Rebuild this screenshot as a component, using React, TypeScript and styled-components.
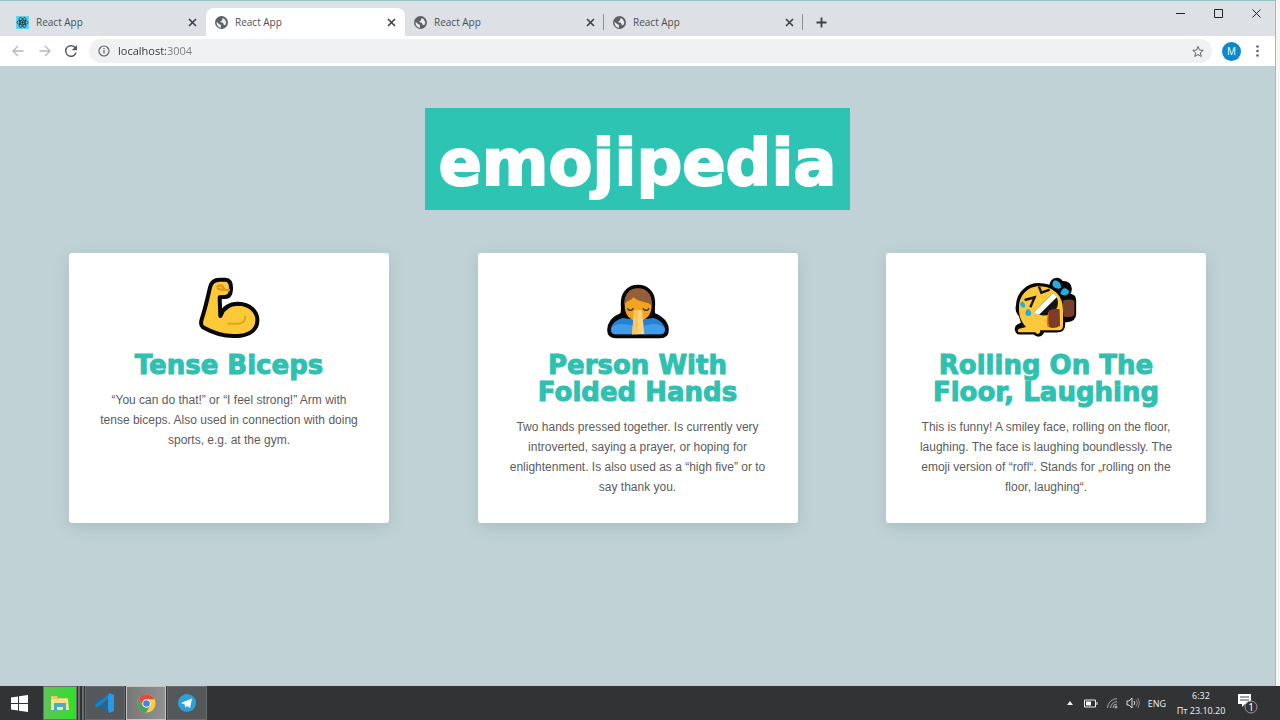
import React from "react";
import styled, { createGlobalStyle, css } from "styled-components";

const GlobalStyle = createGlobalStyle`
  *, *::before, *::after { box-sizing: border-box; }
  body { margin: 0; background: #f6f6f2; }
  button, input { font: inherit; color: inherit; border: 0; padding: 0; background: none; }
`;

const uiFont = `"Open Sans", "Noto Sans", sans-serif`;
const displayFont = `"DejaVu Sans", "Arial Black", sans-serif`;

const Desktop = styled.div`
  min-height: 100vh;
  display: flex;
  flex-direction: column;
  font-family: ${uiFont};
`;

const BrowserWindow = styled.div`
  flex: 1;
  display: flex;
  flex-direction: column;
  margin-right: 4px;
  border-top: 1px solid #96c4c5;
  border-right: 1px solid #8fc4bb;
`;

const TabStrip = styled.div`
  display: flex;
  align-items: flex-end;
  height: 35px;
  padding-left: 7px;
  background: #dde1e6;
`;

const Tab = styled.div<{ $active?: boolean; $divider?: boolean }>`
  position: relative;
  display: flex;
  align-items: center;
  width: 199px;
  height: 28px;
  padding: 0 8px 0 9px;
  font-size: 10px;
  line-height: 16px;
  color: #4b4e53;
  ${(p) =>
    p.$active &&
    css`
      background: #fff;
      border-radius: 8px 8px 0 0;
    `}
  ${(p) =>
    p.$divider &&
    css`
      &::after {
        content: "";
        position: absolute;
        right: 0;
        top: 6px;
        height: 16px;
        border-right: 1px solid #8c9094;
      }
    `}
`;

const TabTitle = styled.span`
  flex: 1;
  padding-left: 7px;
`;

const IconButton = styled.button<{ $w?: number; $h?: number }>`
  display: flex;
  align-items: center;
  justify-content: center;
  width: ${(p) => p.$w ?? 12}px;
  height: ${(p) => p.$h ?? 16}px;
  flex: none;
`;

const WindowControls = styled.div`
  display: flex;
  align-self: flex-start;
  margin-left: auto;
`;

const Toolbar = styled.div`
  display: flex;
  align-items: center;
  height: 30px;
  padding: 0 5px;
  background: #fff;
`;

const Omnibox = styled.div`
  flex: 1;
  display: flex;
  align-items: center;
  height: 24px;
  margin: 0 6px 0 5px;
  padding: 0 8px 0 9px;
  border-radius: 12px;
  background: #f0f1f3;
`;

const Address = styled.input`
  flex: 1;
  min-width: 0;
  margin-left: 8px;
  font-size: 11px;
  line-height: 18px;
  outline: none;
  background: linear-gradient(90deg, #303336 48px, #777a7e 48px);
  -webkit-background-clip: text;
  background-clip: text;
  color: transparent;
`;

const Avatar = styled.button`
  width: 19px;
  height: 19px;
  margin: 0 4px;
  border-radius: 50%;
  background: #0d88cc;
  color: #fff;
  font-size: 10px;
  line-height: 19px;
  text-align: center;
`;

const Page = styled.main`
  flex: 1;
  display: flex;
  flex-direction: column;
  align-items: center;
  padding: 42px 69px;
  background: #c0d2d5;
`;

const SiteTitle = styled.h1`
  margin: 0 0 43px;
  padding: 15px 13px 7px;
  background: #2ec4b3;
  color: #fff;
  font: 700 64px/80px ${displayFont};
  -webkit-text-stroke: 2px #fff;
`;

const Cards = styled.section`
  display: grid;
  grid-template-columns: repeat(3, 320px);
  justify-content: space-between;
  width: 100%;
`;

const Card = styled.article`
  min-height: 270px;
  padding: 23px 27px 26px;
  border-radius: 3px;
  background: #fff;
  box-shadow: 0 4px 16px rgba(60, 100, 105, 0.18);
  text-align: center;
`;

const Emoji = styled.svg`
  display: block;
  width: 64px;
  height: 64px;
  margin: 0 auto 12px;
`;

const CardTitle = styled.h2`
  margin: 0 0 11px;
  color: #2ec0b0;
  font: 700 26px/27px ${displayFont};
  -webkit-text-stroke: 1px #2ec0b0;
`;

const CardText = styled.p`
  margin: 0;
  color: #5c5c5c;
  font: 12px/20px "Liberation Sans", Arial, sans-serif;
`;

const Taskbar = styled.footer`
  display: flex;
  align-items: stretch;
  justify-content: space-between;
  height: 34px;
  background: #313334;
  color: #f2f2f2;
`;

const TaskGroup = styled.div`
  display: flex;
  align-items: stretch;
`;

const StartButton = styled.button`
  display: flex;
  align-items: center;
  justify-content: center;
  width: 38px;
  margin-right: 5px;
`;

const TaskButton = styled.button<{ $tone?: "green" | "active" }>`
  display: flex;
  align-items: center;
  justify-content: center;
  width: ${(p) => (p.$tone === "green" ? 34 : 40)}px;
  margin-right: 1px;
  border: 1px solid ${(p) => (p.$tone === "active" ? "#c4c4c4" : "#6b6d6e")};
  background: ${(p) =>
    p.$tone === "green"
      ? "linear-gradient(90deg, #5fc45c, #2ee028)"
      : p.$tone === "active"
        ? "linear-gradient(90deg, #777, #919191)"
        : "#55585a"};
`;

const StackEdge = styled.span`
  width: 6px;
  margin: 0 1px 0 0;
  border: solid #6b6d6e;
  border-width: 0 2px;
`;

const Tray = styled.div`
  display: flex;
  align-items: center;
  gap: 8px;
  padding-right: 18px;
  font-size: 9px;
  line-height: 15px;
`;

const Clock = styled.time`
  width: 54px;
  text-align: center;
`;

const Globe = () => (
  <svg width="13" height="13" viewBox="0 0 24 24" aria-hidden="true">
    <circle cx="12" cy="12" r="12" fill="#5b6066" />
    <path
      fill="#e9ebee"
      d="M3 10.500l5 4.500 3 1v5.500C6 21 2.500 17 3 10.500zM14 3.500l4 2.500 3 6-2 5-3-1-1.500-3.500L9 11l4-3z"
    />
  </svg>
);

const ReactIcon = () => (
  <svg width="13" height="13" viewBox="0 0 26 26" aria-hidden="true">
    <rect width="26" height="26" rx="1" fill="#61d2ec" />
    <g fill="none" stroke="#17333c" strokeWidth="1.600">
      <ellipse cx="13" cy="13" rx="11" ry="4.500" />
      <ellipse cx="13" cy="13" rx="11" ry="4.500" transform="rotate(60 13 13)" />
      <ellipse cx="13" cy="13" rx="11" ry="4.500" transform="rotate(120 13 13)" />
    </g>
    <circle cx="13" cy="13" r="2.500" fill="#17333c" />
  </svg>
);

const Stroke = ({ d, size, color = "#3c4043", w = 1.5 }: { d: string; size: number; color?: string; w?: number }) => (
  <svg width={size} height={size} viewBox={`0 0 ${size} ${size}`} fill="none" stroke={color} strokeWidth={w} aria-hidden="true">
    <path d={d} />
  </svg>
);

const Biceps = () => (
  <Emoji viewBox="36 18 192 192" role="img" aria-label="Flexed biceps">
    <path
      d="M75 52C79 35 88 29 104 29h18c13 1 17 12 16 30-1 16-7 22-18 22l-16 1 2 56c8-24 26-37 54-37 34 1 55 22 57 46 2 28-18 46-50 50-41 5-82-7-113-25-8-6-7-14-4-24 12-36 18-65 25-96z"
      fill="#fcc938"
      stroke="#070707"
      strokeWidth="12"
      strokeLinejoin="round"
    />
    <path d="M98 49c9-6 15-2 18 6 2 5 8 6 16 5" fill="none" stroke="#df9621" strokeWidth="7" strokeLinecap="round" />
    <path d="M98 55c6 4 12 5 18 4" fill="none" stroke="#df9621" strokeWidth="7" strokeLinecap="round" />
    <path d="M130 161h29c15-1 22-9 22-21" fill="none" stroke="#e6a21f" strokeWidth="6" strokeLinecap="round" />
  </Emoji>
);

const FoldedHands = () => (
  <Emoji viewBox="32 18 192 192" role="img" aria-label="Person with folded hands">
    <path
      d="M128 50c-29 0-46 21-46 49 0 18 2 26-3 35-27 10-38 29-38 46 0 12 7 19 21 19h132c14 0 21-7 21-19 0-18-13-37-40-46-4-10-1-18-1-35 0-28-17-49-46-49z"
      fill="#070707"
      stroke="#070707"
      strokeWidth="11"
    />
    <path d="M47 180c0-17 13-29 35-36l46 6 46-6c22 6 35 20 35 36 0 8-5 13-14 13H61c-9 0-14-5-14-13z" fill="#2382d8" />
    <path d="M48 173c17-15 33-13 65-6v26H61c-10 0-15-8-13-20zM208 173c-14-14-34-13-64-6v26h51c10 0 15-8 13-20z" fill="#429ce8" />
    <path d="M88 104c0-31 15-48 40-48s41 17 41 48c0 30-15 48-41 48s-40-18-40-48z" fill="#f2a51c" />
    <path d="M87 104c-1-32 16-49 41-49 27 0 43 18 41 53-8-15-37-8-55-27-5 12-22 10-27 23z" fill="#946039" />
    <path d="M96 115c4 8 14 8 18 0M143 115c4 8 14 8 18 0" fill="none" stroke="#2a2117" strokeWidth="4" />
    <path d="M116 122q12-4 24 0l7 71h-37z" fill="#ffd27c" />
    <path d="M116 122q6-3 12-2v73h-18z" fill="#ffc45b" />
  </Emoji>
);

const Rofl = () => (
  <Emoji viewBox="44 18 192 192" role="img" aria-label="Rolling on the floor laughing">
    <path
      d="M54 109c1-42 33-67 68-65 12-1 23 3 32 6 1-12 7-21 18-22 8 0 13 5 16 10 14-3 26 7 25 20 0 8-3 13-7 17 13 0 20 5 20 15v42c0 13-10 19-24 20l-9 1v13c0 12-9 17-22 17h-40c-5 15-17 16-26 6H61c-11 0-14-17-4-22l13-6-7-24c-6-7-12-18-9-28z"
      fill="#070707"
      stroke="#070707"
      strokeWidth="9"
      strokeLinejoin="round"
    />
    <path
      d="M59 112c1-37 27-64 62-63 42 1 70 29 70 68v50c0 9-5 14-14 14h-55c3 10-8 15-14 6H61c-8-1-7-9-1-11l20-5c-14-15-22-32-21-59z"
      fill="#fdc83a"
    />
    <path d="M119 50l7 18 25-9" fill="none" stroke="#111" strokeWidth="7" />
    <path d="M76 90l30-8-13 30" fill="none" stroke="#111" strokeWidth="7" />
    <path d="M104 127l58-59c17 17 18 39 5 54-16 17-42 19-63 5z" fill="#151515" />
    <path d="M104 127l58-59 11 13-54 53c-7-1-11-4-15-7z" fill="#fff" />
    <path d="M150 121q16-8 31-3l1 49c-11 7-24 9-33 4-7-17-3-31 1-50z" fill="#793d28" />
    <path d="M192 91q19-6 33 1v44q-15 10-32 3-5-25-1-48z" fill="#75402d" />
    <path d="M150 121q-6 29 0 50l-6-1q-5-27 6-49z" fill="#f2681d" />
    <path d="M62 105q2-10 8-11 9 8 7 16-7 7-15-5zM78 126q5-11 11-8 9 9 6 16-6 7-14 2-4-4-3-10zM160 48q-3-15 9-17 18 6 16 23-12 7-25-6zM183 72q4-19 15-17 17 6 8 18-10 7-23-1z" fill="#20aee2" />
  </Emoji>
);

const tabs = [{ react: true }, { active: true }, { divider: true }, { divider: true }] as {
  react?: boolean;
  active?: boolean;
  divider?: boolean;
}[];

const entries = [
  {
    emoji: <Biceps />,
    name: "Tense Biceps",
    text: "“You can do that!” or “I feel strong!” Arm with tense biceps. Also used in connection with doing sports, e.g. at the gym.",
  },
  {
    emoji: <FoldedHands />,
    name: "Person With Folded Hands",
    text: "Two hands pressed together. Is currently very introverted, saying a prayer, or hoping for enlightenment. Is also used as a “high five” or to say thank you.",
  },
  {
    emoji: <Rofl />,
    name: "Rolling On The Floor, Laughing",
    text: "This is funny! A smiley face, rolling on the floor, laughing. The face is laughing boundlessly. The emoji version of “rofl“. Stands for „rolling on the floor, laughing“.",
  },
];

export default function App() {
  return (
    <Desktop>
      <GlobalStyle />
      <BrowserWindow>
        <TabStrip>
          {tabs.map((t, i) => (
            <Tab key={i} $active={t.active} $divider={t.divider}>
              {t.react ? <ReactIcon /> : <Globe />}
              <TabTitle>React App</TabTitle>
              <IconButton aria-label="Close tab">
                <Stroke size={9} d="M1 1l7 7M8 1l-7 7" w={1.6} />
              </IconButton>
            </Tab>
          ))}
          <IconButton aria-label="New tab" $w={36} $h={28}>
            <Stroke size={11} d="M5.500 0.500v10M0.500 5.500h10" w={1.8} />
          </IconButton>
          <WindowControls>
            <IconButton aria-label="Minimize" $w={38} $h={24}>
              <Stroke size={9} d="M0 4.500h9" color="#222" w={1} />
            </IconButton>
            <IconButton aria-label="Maximize" $w={38} $h={24}>
              <Stroke size={9} d="M.5.5h8v8h-8z" color="#222" w={1} />
            </IconButton>
            <IconButton aria-label="Close" $w={38} $h={24}>
              <Stroke size={9} d="M.5.5l8 8M8.500.5l-8 8" color="#222" w={1} />
            </IconButton>
          </WindowControls>
        </TabStrip>

        <Toolbar>
          <IconButton aria-label="Back" $w={26}>
            <Stroke size={12} d="M11.500 6H1M6 1L1 6l5 5" color="#b5b7b9" w={1.3} />
          </IconButton>
          <IconButton aria-label="Forward" $w={27}>
            <Stroke size={12} d="M.5 6H11M6 1l5 5-5 5" color="#b5b7b9" w={1.3} />
          </IconButton>
          <IconButton aria-label="Reload" $w={26}>
            <svg width="12" height="12" viewBox="4 4 16 16" fill="#55595e" aria-hidden="true">
              <path d="M17.650 6.350A8 8 0 1 0 19.730 14h-2.080A6 6 0 1 1 12 6c1.660 0 3.140.69 4.220 1.780L13 11h7V4z" />
            </svg>
          </IconButton>
          <Omnibox>
            <IconButton aria-label="Site information">
              <Stroke size={12} d="M6 1a5 5 0 1 0 0 10A5 5 0 0 0 6 1M6 5v3.500M6 3v1.300" color="#5f6368" w={1.2} />
            </IconButton>
            <Address aria-label="Address" defaultValue="localhost:3004" />
            <IconButton aria-label="Bookmark this page">
              <svg width="13" height="13" viewBox="0 0 24 24" fill="none" stroke="#5f6368" strokeWidth="2" aria-hidden="true">
                <path d="M12 2l2.900 7.100 7.600.6-5.800 4.900 1.800 7.400-6.500-4-6.500 4 1.800-7.400-5.800-4.900 7.600-.6z" />
              </svg>
            </IconButton>
          </Omnibox>
          <Avatar aria-label="Profile M">M</Avatar>
          <IconButton aria-label="Menu" $w={25}>
            <svg width="3" height="12" fill="#5f6368" aria-hidden="true">
              <circle cx="1.500" cy="1.500" r="1.300" />
              <circle cx="1.500" cy="6" r="1.300" />
              <circle cx="1.500" cy="10.500" r="1.300" />
            </svg>
          </IconButton>
        </Toolbar>

        <Page>
          <SiteTitle>emojipedia</SiteTitle>
          <Cards>
            {entries.map((e) => (
              <Card key={e.name}>
                {e.emoji}
                <CardTitle>{e.name}</CardTitle>
                <CardText>{e.text}</CardText>
              </Card>
            ))}
          </Cards>
        </Page>
      </BrowserWindow>

      <Taskbar>
        <TaskGroup>
          <StartButton aria-label="Start">
            <svg width="17" height="17" viewBox="0 0 17 17" fill="#fff" aria-hidden="true">
              <path d="M0 2.400L7 1.400V8H0zM8 1.200L17 0v8H8zM0 9h7v6.600l-7-1zM8 9h9v8l-9-1.200z" />
            </svg>
          </StartButton>
          <TaskButton aria-label="File Explorer" $tone="green">
            <svg width="20" height="18" viewBox="0 0 20 18" aria-hidden="true">
              <path d="M1 2h6l1 2h10v3H1z" fill="#efc75a" />
              <path d="M1 5h17l1 11H1z" fill="#fae08f" />
              <path d="M4 9h12v8h-3v-4H7v4H4z" fill="#45acd0" />
            </svg>
          </TaskButton>
          <StackEdge />
          <TaskButton aria-label="Visual Studio Code">
            <svg width="20" height="20" viewBox="0 0 20 20" aria-hidden="true">
              <path d="M0 7l2-1.500L14 15v4L0 8z" fill="#0a6fb5" />
              <path d="M0 13l2 1.500L14 5V1L0 12z" fill="#1584cf" />
              <path d="M14 0l5 2v16l-5 2-1-4V4z" fill="#259be8" />
            </svg>
          </TaskButton>
          <TaskButton aria-label="Google Chrome" $tone="active">
            <svg width="19" height="19" viewBox="0 0 20 20" aria-hidden="true">
              <circle cx="10" cy="10" r="9.500" fill="#f9cf3a" />
              <path d="M1.800 5.200A9.500 9.500 0 0 1 18.300 5.500H10L6 12z" fill="#df4a3c" />
              <path d="M1.800 5.200A9.500 9.500 0 0 0 9.500 19.500L14 12l-8 .5z" fill="#46a45a" />
              <circle cx="10" cy="10" r="4.500" fill="#fff" />
              <circle cx="10" cy="10" r="3.500" fill="#4285e8" />
            </svg>
          </TaskButton>
          <TaskButton aria-label="Telegram">
            <svg width="18" height="18" viewBox="0 0 18 18" aria-hidden="true">
              <circle cx="9" cy="9" r="9" fill="#2ca2da" />
              <path d="M3 9l11-4.500-2 9.500-3-2-1.800 1.800-.5-3.200z" fill="#fff" />
            </svg>
          </TaskButton>
        </TaskGroup>

        <Tray>
          <IconButton aria-label="Show hidden icons">
            <svg width="6" height="4" fill="#eee" aria-hidden="true"><path d="M3 0l3 4H0z" /></svg>
          </IconButton>
          <svg width="14" height="9" viewBox="0 0 14 9" aria-hidden="true">
            <path d="M.5 1h11v7H.5zM13 3v3" fill="none" stroke="#eee" />
            <path d="M2 2.500h5v4H2z" fill="#fff" />
          </svg>
          <svg width="12" height="12" viewBox="0 0 12 12" fill="none" stroke="#aaa" aria-hidden="true">
            <path d="M1.500 11A10 10 0 0 1 11 1.500M4.500 11A7 7 0 0 1 11 4.500M7 11a4 4 0 0 1 4-4" />
            <circle cx="10" cy="10" r="1" fill="#ddd" />
          </svg>
          <svg width="14" height="12" viewBox="0 0 14 12" fill="none" stroke="#ddd" aria-hidden="true">
            <path d="M1 4h2l3-3v10L3 8H1zM8 4q1.500 2 0 4" />
            <path d="M10 2.500q3 3.500 0 7M12 1q3 5 0 10" stroke="#888" />
          </svg>
          <span>ENG</span>
          <Clock>
            6:32
            <br />
            Пт 23.10.20
          </Clock>
          <IconButton aria-label="Notifications: 1" $w={26} $h={24}>
            <svg width="22" height="22" viewBox="0 0 22 22" aria-hidden="true">
              <path d="M0 2h13v10H7l-3 3v-3H0z" fill="#fff" />
              <path d="M2 5h9M2 8h9" stroke="#444" />
              <circle cx="13" cy="15" r="6" fill="#313334" stroke="#999" />
              <text x="13" y="19" textAnchor="middle" fontSize="10" fill="#fff" fontFamily="Noto Sans, sans-serif">1</text>
            </svg>
          </IconButton>
        </Tray>
      </Taskbar>
    </Desktop>
  );
}
